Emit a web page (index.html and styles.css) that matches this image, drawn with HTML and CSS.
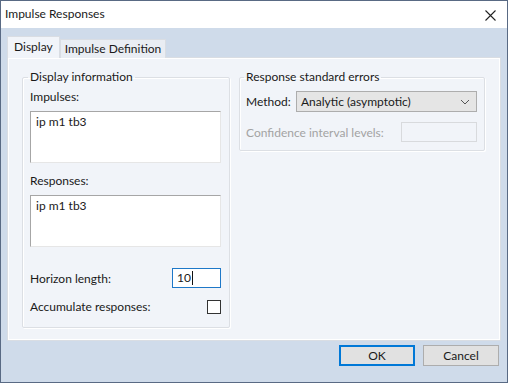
FILE: index.html
```html
<!DOCTYPE html>
<html>
<head>
<meta charset="utf-8">
<link rel="stylesheet" href="styles.css">
</head>
<body>
<div class="window">
  <div class="titlebar">
    <span class="title">Impulse Responses</span>
    <svg class="close" width="11" height="11" viewBox="0 0 11 11"><path d="M0.5 0.5 L10.5 10.5 M10.5 0.5 L0.5 10.5" stroke="#222" stroke-width="1.1" fill="none"/></svg>
  </div>
  <div class="client">
    <div class="tabs">
      <div class="tab active">Display</div>
      <div class="tab">Impulse Definition</div>
    </div>
    <div class="panel">
      <fieldset class="group left">
        <legend>Display information</legend>
        <div class="label">Impulses:</div>
        <div class="textarea">ip m1 tb3</div>
        <div class="label second">Responses:</div>
        <div class="textarea">ip m1 tb3</div>
        <div class="row horizon">
          <span>Horizon length:</span>
          <div class="input focused">10<span class="caret"></span></div>
        </div>
        <div class="row accum">
          <span>Accumulate responses:</span>
          <div class="checkbox"></div>
        </div>
      </fieldset>
      <fieldset class="group right">
        <legend>Response standard errors</legend>
        <div class="row method">
          <span>Method:</span>
          <div class="select">
            <span>Analytic (asymptotic)</span>
            <svg width="10" height="6" viewBox="0 0 10 6"><path d="M1 1 L5 5 L9 1" stroke="#555" stroke-width="1" fill="none"/></svg>
          </div>
        </div>
        <div class="row conf">
          <span class="disabled">Confidence interval levels:</span>
          <div class="input dis"></div>
        </div>
      </fieldset>
    </div>
    <div class="buttons">
      <div class="btn default">OK</div>
      <div class="btn">Cancel</div>
    </div>
  </div>
</div>
</body>
</html>
```

FILE: styles.css
```css
* { box-sizing: border-box; }
html, body { margin: 0; padding: 0; }
body {
  font-family: "Lato", "Noto Sans", sans-serif;
  font-size: 12px;
  color: #1a1a1a;
  width: 508px;
  height: 383px;
  overflow: hidden;
}
.window {
  width: 508px;
  height: 383px;
  border: 1px solid #596a84;
  display: flex;
  flex-direction: column;
  background: #cfdbea;
}
.titlebar {
  height: 27px;
  background: #ffffff;
  display: flex;
  align-items: center;
  justify-content: space-between;
  padding: 1px 11px 0 4px;
}
.title { font-size: 12px; line-height: 16px; margin-top: -2px; }
.close { display: block; }
.client {
  flex: 1;
  padding: 8px 6px 0 6px;
  display: flex;
  flex-direction: column;
}
.tabs {
  display: flex;
  align-items: flex-end;
  height: 22px;
  position: relative;
  z-index: 1;
  margin-bottom: -1px;
}
.tab {
  height: 19px;
  padding: 0 4px;
  line-height: 17px;
  border: 1px solid #d9dde3;
  border-bottom: none;
  background: #e9edf3;
}
.tab.active {
  height: 22px;
  line-height: 20px;
  padding: 0 6px;
  background: #f1f4f9;
  border-color: #d9dde3;
}
.panel {
  width: 494px;
  height: 284px;
  background: #f1f4f9;
  border: 1px solid #d9dde3;
  box-shadow: inset 0 0 0 1px #ffffff;
  padding: 11px 0 0 14px;
  display: flex;
  align-items: flex-start;
  gap: 9px;
}
fieldset.group {
  margin: 0;
  border: 1px solid #dcdfe4;
  border-radius: 2px;
  box-shadow: 1px 1px 0 #ffffff inset, 1px 1px 0 #ffffff;
}
legend {
  padding: 0 2px;
  margin-left: -2px;
  line-height: 16px;
}
.group.left {
  width: 208px;
  padding: 4px 8px 14px 7px;
}
.group.right {
  width: 246px;
  padding: 6px 7px 8px 6px;
}
.label { line-height: 16px; }
.label.second { margin-top: 10px; }
.textarea {
  margin-top: 6px;
  height: 52px;
  background: #ffffff;
  border: 1px solid;
  border-color: #a6a6a6 #e6e6e6 #e6e6e6 #a6a6a6;
  padding: 2px 5px;
  line-height: 16px;
}
.row {
  display: flex;
  align-items: center;
  justify-content: space-between;
}
.horizon { margin-top: 21px; height: 20px; }
.accum { margin-top: 12px; height: 13px; }
.input {
  width: 49px;
  height: 20px;
  background: #fff;
  border: 1px solid #c8c8c8;
  padding: 0 4px;
  line-height: 18px;
  display: flex;
  align-items: center;
}
.input.focused { border-color: #1e78c8; }
.caret { display: inline-block; width: 1px; height: 14px; background: #111; margin-left: 1px; }
.checkbox {
  width: 14px;
  height: 14px;
  border: 1px solid #333;
  background: #fff;
}
.method { height: 21px; }
.select {
  width: 181px;
  height: 21px;
  background: #e5e5e5;
  border: 1px solid #adadad;
  display: flex;
  align-items: center;
  justify-content: space-between;
  padding: 0 6px 0 4px;
}
.select svg { display: block; }
.conf { margin-top: 10px; height: 20px; }
.disabled { color: #a3a3a3; }
.input.dis { width: 76px; border-color: #d8dadd; background: #f1f4f9; }
.buttons {
  display: flex;
  justify-content: flex-end;
  gap: 8px;
  padding: 4px 2px 0 0;
}
.btn {
  width: 76px;
  height: 21px;
  background: #e1e1e1;
  border: 1px solid #adadad;
  text-align: center;
  line-height: 19px;
}
.btn.default {
  border-color: #0078d7;
  box-shadow: inset 0 0 0 1px #0078d7;
}
```
